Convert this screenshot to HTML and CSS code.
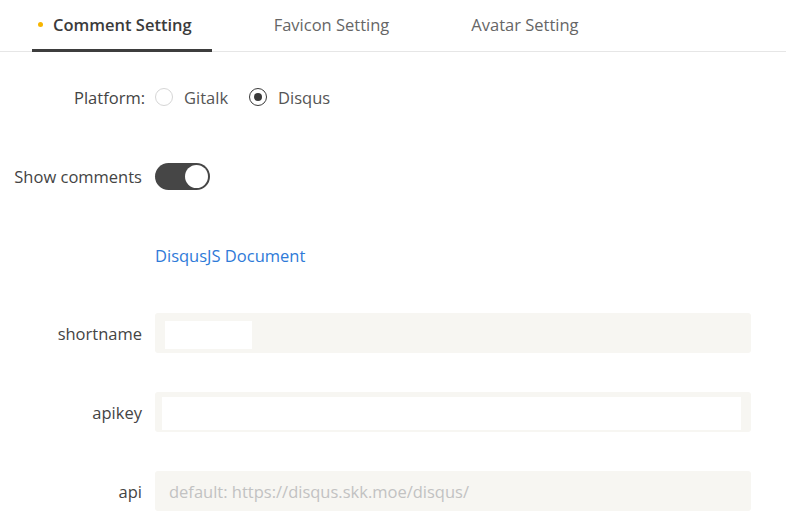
FILE: index.html
```html
<!DOCTYPE html>
<html>
<head>
<meta charset="utf-8">
<link rel="stylesheet" href="styles.css">
</head>
<body>
<div class="tabs">
  <div class="tab active"><span class="dot"></span>Comment Setting</div>
  <div class="tab">Favicon Setting</div>
  <div class="tab">Avatar Setting</div>
</div>
<div class="form">
  <div class="row">
    <div class="label label-colon">Platform:</div>
    <div class="field radios">
      <label class="radio"><span class="circle"></span>Gitalk</label>
      <label class="radio checked"><span class="circle"></span>Disqus</label>
    </div>
  </div>
  <div class="row">
    <div class="label">Show comments</div>
    <div class="field"><span class="switch"><span class="knob"></span></span></div>
  </div>
  <div class="row row-link">
    <div class="label"></div>
    <div class="field"><a class="link" href="#">DisqusJS Document</a></div>
  </div>
  <div class="row">
    <div class="label">shortname</div>
    <div class="field"><div class="box box-short"><input class="inner short" type="text"></div></div>
  </div>
  <div class="row">
    <div class="label">apikey</div>
    <div class="field"><div class="box box-key"><input class="inner key" type="text"></div></div>
  </div>
  <div class="row">
    <div class="label">api</div>
    <div class="field"><div class="box box-api"><input class="plain" type="text" placeholder="default: https://disqus.skk.moe/disqus/"></div></div>
  </div>
</div>
</body>
</html>
```
FILE: styles.css
```css
html, body {
  margin: 0;
  padding: 0;
  background: #fff;
}
body {
  font-family: "Open Sans", "Noto Sans", sans-serif;
  font-size: 16.5px;
  color: #444;
}
.tabs {
  display: flex;
  height: 51px;
  border-bottom: 1px solid #e6e6e6;
  padding-left: 32px;
  gap: 41px;
}
.tab {
  position: relative;
  padding: 0 20px 2px 21px;
  line-height: 49px;
  color: #666;
}
.tab.active {
  color: #3b3b3b;
  font-weight: 600;
}
.tab.active::after {
  content: "";
  position: absolute;
  left: 0;
  right: 0;
  bottom: -1px;
  height: 3px;
  background: #3d3d3d;
}
.dot {
  position: absolute;
  left: 6px;
  top: 22px;
  width: 5px;
  height: 5px;
  border-radius: 50%;
  background: #f7b500;
}
.form {
  padding-top: 25px;
  display: flex;
  flex-direction: column;
  gap: 39px;
}
.row {
  display: flex;
  align-items: center;
  height: 40px;
  gap: 13px;
}
.row-link {
  height: 39px;
}
.label {
  width: 142px;
  text-align: right;
  color: #444;
  white-space: nowrap;
}
.label-colon {
  width: 145px;
  margin-right: -3px;
}
.radios {
  display: flex;
  gap: 21px;
}
.radio {
  display: flex;
  align-items: center;
  gap: 11px;
  color: #555;
}
.circle {
  box-sizing: border-box;
  width: 18px;
  height: 18px;
  border: 1px solid #d6d6d6;
  border-radius: 50%;
  display: flex;
  align-items: center;
  justify-content: center;
}
.radio.checked .circle {
  border-color: #3a3a3a;
}
.radio.checked .circle::after {
  content: "";
  width: 8px;
  height: 8px;
  border-radius: 50%;
  background: #3a3a3a;
}
.switch {
  box-sizing: border-box;
  display: flex;
  justify-content: flex-end;
  align-items: center;
  width: 55px;
  height: 27px;
  border-radius: 14px;
  background: #464646;
  padding: 2px;
}
.knob {
  width: 23px;
  height: 23px;
  border-radius: 50%;
  background: #fff;
}
.link {
  color: #2e7ad8;
  text-decoration: none;
}
.row-link .field {
  padding-top: 1px;
}
.box {
  box-sizing: border-box;
  width: 596px;
  height: 40px;
  background: #f7f6f2;
  border-radius: 3px;
  display: flex;
}
.inner {
  border: none;
  outline: none;
  background: #fff;
  padding: 0;
  margin: 0;
}
.box-short {
  padding: 8px 0 0 10px;
}
.short {
  width: 87px;
  height: 28px;
}
.box-key {
  padding: 5px 0 0 7px;
}
.key {
  width: 579px;
  height: 33px;
}
.plain {
  border: none;
  outline: none;
  background: transparent;
  width: 100%;
  padding: 0 14px;
  font-family: inherit;
  font-size: 16.5px;
  color: #444;
}
.plain::placeholder {
  color: #c2c2c2;
}
```
